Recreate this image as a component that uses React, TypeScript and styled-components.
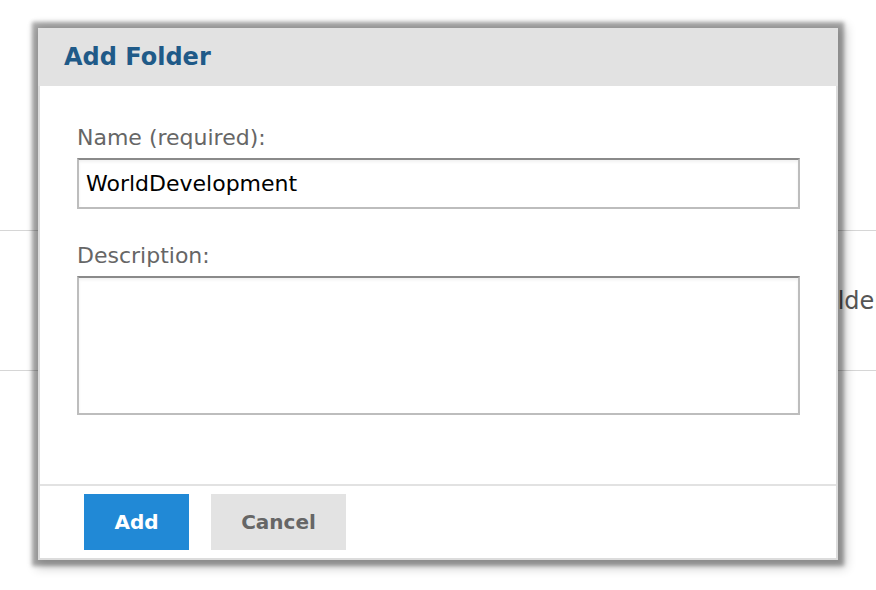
import React from 'react'
import styled, { createGlobalStyle } from 'styled-components'

const GlobalStyle = createGlobalStyle`
  html, body {
    margin: 0;
    padding: 0;
    background: #ffffff;
  }
  body {
    font-family: 'DejaVu Sans', Verdana, sans-serif;
  }
  * {
    box-sizing: border-box;
  }
`

const App: React.FC = () => {
  return (
    <>
      <GlobalStyle />
      <Page>
        <FolderList>
          <FolderRow>
            <FolderName>Folder</FolderName>
          </FolderRow>
        </FolderList>
        <Dialog role="dialog" aria-labelledby="add-folder-title">
          <Header>
            <Title id="add-folder-title">Add Folder</Title>
          </Header>
          <Body>
            <Field>
              <Label htmlFor="folder-name">Name (required):</Label>
              <TextInput id="folder-name" defaultValue="WorldDevelopment" />
            </Field>
            <Field>
              <Label htmlFor="folder-desc">Description:</Label>
              <TextArea id="folder-desc" />
            </Field>
          </Body>
          <Footer>
            <Button $primary>Add</Button>
            <Button>Cancel</Button>
          </Footer>
        </Dialog>
      </Page>
    </>
  )
}

const Page = styled.div`
  position: relative;
  width: 876px;
  height: 590px;
  overflow: hidden;
  background: #fff;
`

const FolderList = styled.div`
  padding-top: 230px;
`

const FolderRow = styled.div`
  height: 141px;
  border-top: 1px solid #d6d6d6;
  border-bottom: 1px solid #d6d6d6;
  display: flex;
  align-items: center;
  padding-left: 810px;
`

const FolderName = styled.span`
  font-size: 24px;
  color: #555;
  white-space: nowrap;
`

const Dialog = styled.div`
  position: absolute;
  top: 28px;
  left: 38px;
  width: 800px;
  height: 532px;
  display: flex;
  flex-direction: column;
  background: #fff;
  border: 2px solid #dcdcdc;
  border-top: 0;
  box-shadow: 0 0 4px 6px rgba(0, 0, 0, 0.32), 3px 3px 10px 5px rgba(0, 0, 0, 0.2);
`

const Header = styled.div`
  height: 58px;
  margin: 0 -2px;
  padding: 0 26px;
  background: #e2e2e2;
  display: flex;
  align-items: center;
`

const Title = styled.h2`
  margin: 0;
  font-size: 24px;
  font-weight: bold;
  color: #1f5a88;
`

const Body = styled.div`
  flex: 1;
  padding: 39px 37px 0;
  display: flex;
  flex-direction: column;
  gap: 34px;
  border-bottom: 2px solid #e2e2e2;
`

const Field = styled.div`
  display: flex;
  flex-direction: column;
  gap: 8px;
`

const Label = styled.label`
  font-size: 22px;
  line-height: 25px;
  color: #666;
`

const TextInput = styled.input`
  width: 723px;
  height: 51px;
  padding: 0 7px;
  font-family: inherit;
  font-size: 22px;
  color: #000;
  border: 2px solid #bdbdbd;
  border-top-color: #8a8a8a;
  box-shadow: inset 0 2px 3px rgba(0, 0, 0, 0.06);
  outline: none;
`

const TextArea = styled.textarea`
  width: 723px;
  height: 139px;
  padding: 6px 7px;
  font-family: inherit;
  font-size: 22px;
  resize: none;
  border: 2px solid #bdbdbd;
  border-top-color: #8a8a8a;
  box-shadow: inset 0 2px 3px rgba(0, 0, 0, 0.06);
  outline: none;
`

const Footer = styled.div`
  height: 72px;
  padding: 8px 44px 8px;
  display: flex;
  gap: 22px;
`

const Button = styled.button<{ $primary?: boolean }>`
  height: 56px;
  padding: 0 ${(p) => (p.$primary ? '27px' : '30px')};
  min-width: ${(p) => (p.$primary ? '105px' : '135px')};
  border: 0;
  font-family: inherit;
  font-size: 20px;
  font-weight: bold;
  background: ${(p) => (p.$primary ? '#2189d6' : '#e3e3e3')};
  color: ${(p) => (p.$primary ? '#fff' : '#666')};
  cursor: pointer;
`

export default App
